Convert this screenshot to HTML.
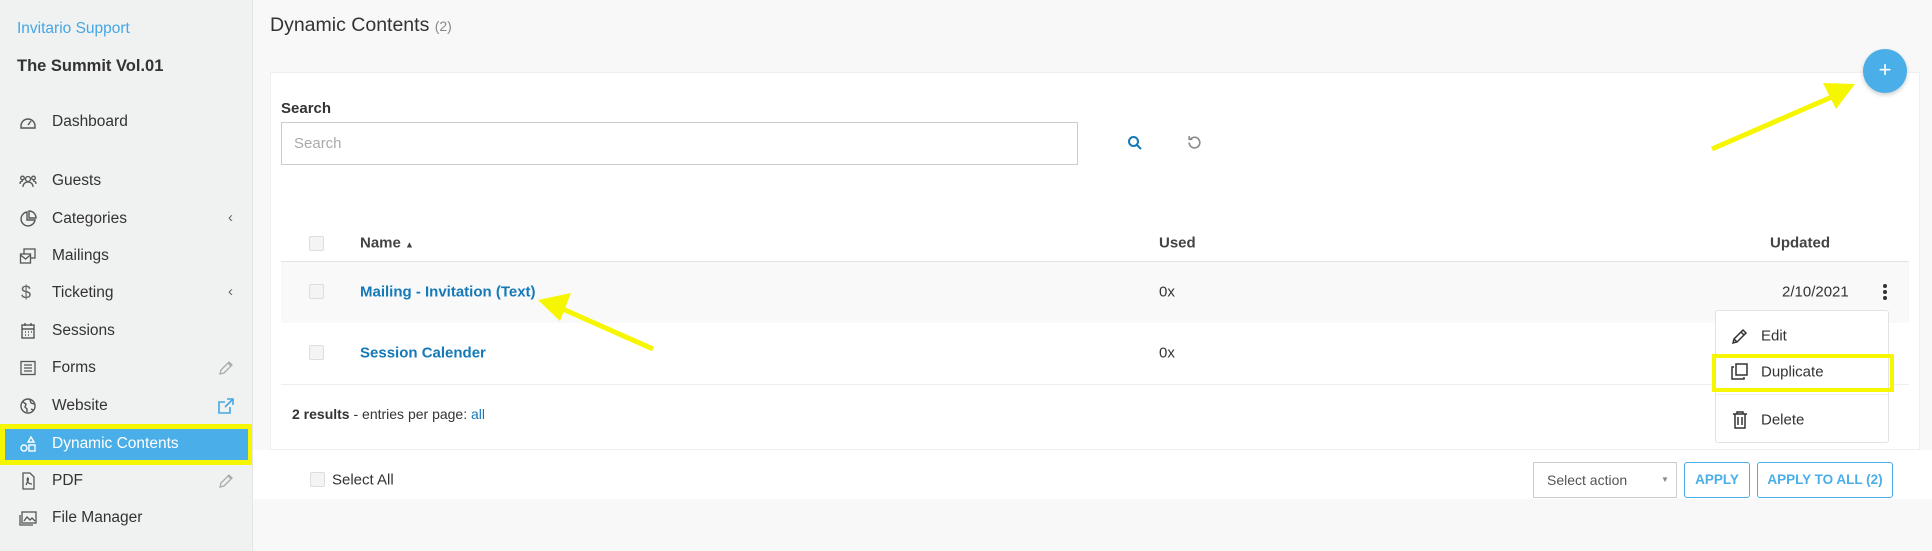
<!DOCTYPE html>
<html><head><meta charset="utf-8"><style>
*{box-sizing:border-box;margin:0;padding:0}
body{width:1932px;height:551px;overflow:hidden;background:#f8f8f8;font-family:"Liberation Sans",sans-serif;color:#333;position:relative}
.a{position:absolute;white-space:nowrap}
#side{position:absolute;left:0;top:0;width:253px;height:551px;background:#f0f1f1;border-right:1px solid #e6e6e6;overflow:hidden}
.nav{position:absolute;left:52px;font-size:15.5px;color:#333;transform:translateY(-50%)}
.ic{position:absolute;left:19px;width:18px;height:18px;transform:translateY(-50%)}
.cb{position:absolute;width:15px;height:15px;border:1px solid #ddd;background:#f4f4f4;border-radius:2px}
.t{font-size:15px;transform:translateY(-50%)}
.lnk{color:#1479b8}
</style></head><body>
<div id="side">
<div class="a" style="left:17px;top:20px;font-size:15.5px;color:#45a7e3">Invitario Support</div>
<div class="a" style="left:17px;top:57px;font-size:16.5px;font-weight:bold;color:#333">The Summit Vol.01</div>

<svg class="ic" style="top:122px" viewBox="0 0 18 18" fill="none" stroke="#555" stroke-width="1.4"><path d="M2 13a7 7 0 1 1 14 0v2H2z"/><path d="M9 12l3-4"/></svg>
<div class="nav a" style="top:122px">Dashboard</div>
<svg class="ic" style="top:181px" viewBox="0 0 18 18" fill="none" stroke="#555" stroke-width="1.3"><circle cx="9" cy="7" r="2.5"/><circle cx="3.5" cy="6" r="1.8"/><circle cx="14.5" cy="6" r="1.8"/><path d="M4 15c0-3 2-5 5-5s5 2 5 5M1 12c0-2 1-3 3-3M17 12c0-2-1-3-3-3"/></svg>
<div class="nav a" style="top:181px">Guests</div>
<svg class="ic" style="top:219px" viewBox="0 0 18 18" fill="none" stroke="#555" stroke-width="1.4"><path d="M8 2a7 7 0 1 0 8 8H8z"/><path d="M10 1v7h7a7 7 0 0 0-7-7z"/></svg>
<div class="nav a" style="top:219px">Categories</div>
<div class="a" style="left:228px;top:209px;font-size:15px;color:#666">‹</div>
<svg class="ic" style="top:256px" viewBox="0 0 18 18" fill="none" stroke="#555" stroke-width="1.3"><rect x="5" y="2" width="11" height="9"/><rect x="1.5" y="7" width="10" height="9" fill="#f0f1f1"/><path d="M1.5 8l5 4 5-4"/></svg>
<div class="nav a" style="top:256px">Mailings</div>
<div class="a" style="left:21px;top:293px;font-size:18px;color:#666;transform:translateY(-50%)">$</div>
<div class="nav a" style="top:293px">Ticketing</div>
<div class="a" style="left:228px;top:283px;font-size:15px;color:#666">‹</div>
<svg class="ic" style="top:331px" viewBox="0 0 18 18" fill="none" stroke="#555" stroke-width="1.4"><rect x="3" y="3" width="12" height="13"/><path d="M6 1v3M12 1v3M3 7h12M6 10h1M9 10h1M12 10h1M6 13h1M9 13h1"/></svg>
<div class="nav a" style="top:331px">Sessions</div>
<svg class="ic" style="top:368px" viewBox="0 0 18 18" fill="none" stroke="#555" stroke-width="1.3"><rect x="2" y="2.5" width="14" height="13"/><path d="M5 6h8M5 9h8M5 12h8"/></svg>
<div class="nav a" style="top:368px">Forms</div>
<svg class="a" style="left:218px;top:360px" width="16" height="16" viewBox="0 0 16 16" fill="none" stroke="#aaa" stroke-width="1.3"><path d="M2 14l1-4 8-8 3 3-8 8zM10 3l3 3"/></svg>
<svg class="ic" style="top:406px" viewBox="0 0 18 18" fill="none" stroke="#555" stroke-width="1.4"><circle cx="9" cy="9" r="7"/><path d="M4 5l3 2-1 3 2 2v3M11 3l1 3 3 1M12 12l2 1"/></svg>
<div class="nav a" style="top:406px">Website</div>
<svg class="a" style="left:217px;top:397px" width="18" height="18" viewBox="0 0 18 18" fill="none" stroke="#45a7e3" stroke-width="1.6"><path d="M13 10v6H2V5h6M10 2h6v6M16 2L8 10"/></svg>
<div class="a" style="left:0;top:424px;width:253px;height:41px;background:#f6f600"></div>
<div class="a" style="left:5px;top:429px;width:243px;height:31px;background:#4aaee8"></div>
<svg class="ic" style="top:444px" viewBox="0 0 18 18" fill="none" stroke="#fff" stroke-width="1.4"><path d="M12 2l3 5H9z"/><circle cx="5" cy="13" r="3"/><rect x="10" y="10" width="6" height="6"/></svg>
<div class="nav a" style="top:444px;color:#fff">Dynamic Contents</div>
<svg class="ic" style="top:481px" viewBox="0 0 18 18" fill="none" stroke="#555" stroke-width="1.3"><path d="M4 1h7l4 4v12H4z"/><path d="M7 13c2-4 3-6 2-7s-2 6 4 6"/></svg>
<div class="nav a" style="top:481px">PDF</div>
<svg class="a" style="left:218px;top:473px" width="16" height="16" viewBox="0 0 16 16" fill="none" stroke="#aaa" stroke-width="1.3"><path d="M2 14l1-4 8-8 3 3-8 8zM10 3l3 3"/></svg>
<svg class="ic" style="top:518px" viewBox="0 0 18 18" fill="none" stroke="#555" stroke-width="1.3"><rect x="3" y="3" width="14" height="11"/><path d="M1 6v10h13M5 12l3-4 3 3 2-2 3 3"/></svg>
<div class="nav a" style="top:518px">File Manager</div>
<svg class="ic" style="top:564px" viewBox="0 0 18 18" fill="none" stroke="#555" stroke-width="1.3"><rect x="2" y="2" width="14" height="13"/></svg>
<div class="nav a" style="top:564px">Checklist</div>
</div>

<div class="a" style="left:270px;top:14px;font-size:19.5px;color:#333">Dynamic Contents <span style="font-size:14px;color:#888">(2)</span></div>

<div class="a" style="left:270px;top:72px;width:1650px;height:378px;background:#fff;border:1px solid #efefef"></div>
<div class="a" style="left:253px;top:450px;width:1679px;height:49px;background:#fff"></div>

<div class="a" style="left:281px;top:100px;font-size:15px;font-weight:bold;color:#333">Search</div>
<div class="a" style="left:281px;top:122px;width:797px;height:43px;border:1px solid #ccc;background:#fff"></div>
<div class="a" style="left:294px;top:135px;font-size:15px;color:#aaa">Search</div>
<svg class="a" style="left:1127px;top:135px" width="16" height="16" viewBox="0 0 16 16" fill="none" stroke="#1479b8" stroke-width="2"><circle cx="6.5" cy="6.5" r="4.5"/><path d="M10 10l4 4"/></svg>
<svg class="a" style="left:1186px;top:134px" width="17" height="17" viewBox="0 0 16 16" fill="none" stroke="#888" stroke-width="1.5"><path d="M3 8a5 5 0 1 0 1.5-3.5"/><path d="M3 2v3h3"/></svg>

<div class="cb" style="left:309px;top:236px"></div>
<div class="a t" style="left:360px;top:243px;font-weight:bold;color:#444">Name <span style="font-size:9px">▲</span></div>
<div class="a t" style="left:1159px;top:243px;font-weight:bold;color:#444">Used</div>
<div class="a t" style="left:1770px;top:243px;font-weight:bold;color:#444">Updated</div>
<div class="a" style="left:281px;top:261px;width:1628px;height:1px;background:#e4e4e4"></div>
<div class="a" style="left:281px;top:262px;width:1628px;height:61px;background:#f9f9f9"></div>
<div class="cb" style="left:309px;top:284px"></div>
<div class="a t lnk" style="left:360px;top:292px;font-weight:bold">Mailing - Invitation (Text)</div>
<div class="a t" style="left:1159px;top:292px">0x</div>
<div class="a t" style="left:1782px;top:292px">2/10/2021</div>
<div class="a" style="left:1883px;top:284px;width:4px;height:4px;border-radius:50%;background:#333;box-shadow:0 6px 0 #333,0 12px 0 #333"></div>
<div class="cb" style="left:309px;top:345px"></div>
<div class="a t lnk" style="left:360px;top:353px;font-weight:bold">Session Calender</div>
<div class="a t" style="left:1159px;top:353px">0x</div>
<div class="a" style="left:281px;top:384px;width:1628px;height:1px;background:#eee"></div>
<div class="a t" style="left:292px;top:414px;font-size:14px"><b>2 results</b> - entries per page: <span class="lnk">all</span></div>

<div class="a" style="left:1715px;top:310px;width:174px;height:133px;background:#fff;border:1px solid #e2e2e2;border-radius:3px"></div>
<div class="a" style="left:1716px;top:394px;width:172px;height:1px;background:#eee"></div>
<svg class="a" style="left:1731px;top:327px" width="18" height="18" viewBox="0 0 18 18" fill="none" stroke="#333" stroke-width="1.5"><path d="M2 16l1-4 9-9 3 3-9 9zM10 5l3 3M3 12l3 3"/></svg>
<div class="a t" style="left:1761px;top:336px">Edit</div>
<svg class="a" style="left:1731px;top:363px" width="17" height="17" viewBox="0 0 17 17" fill="none" stroke="#333" stroke-width="1.5"><rect x="5" y="1" width="11" height="11"/><path d="M3 4H1v12h12v-2"/></svg>
<div class="a t" style="left:1761px;top:372px">Duplicate</div>
<div class="a" style="left:1712px;top:354px;width:182px;height:38px;border:4px solid #f6f600"></div>
<svg class="a" style="left:1732px;top:411px" width="16" height="18" viewBox="0 0 16 18" fill="none" stroke="#333" stroke-width="1.5"><path d="M1 3h14M5 3V1h6v2M3 3v14h10V3M6 6v8M10 6v8"/></svg>
<div class="a t" style="left:1761px;top:420px">Delete</div>

<div class="a" style="left:1863px;top:49px;width:44px;height:44px;border-radius:50%;background:#4aaee8;box-shadow:0 2px 4px rgba(0,0,0,.2);color:#fff;font-size:22px;text-align:center;line-height:42px">+</div>

<div class="cb" style="left:310px;top:472px"></div>
<div class="a t" style="left:332px;top:480px">Select All</div>
<div class="a" style="left:1533px;top:462px;width:144px;height:36px;border:1px solid #ccc;background:#fff"></div>
<div class="a t" style="left:1547px;top:480px;font-size:14px;color:#555">Select action</div>
<div class="a" style="left:1661px;top:475px;font-size:8px;color:#888">▼</div>
<div class="a" style="left:1684px;top:462px;width:66px;height:36px;border:1px solid #4aaee8;border-radius:3px;color:#4aaee8;font-size:13.5px;font-weight:bold;text-align:center;line-height:34px">APPLY</div>
<div class="a" style="left:1757px;top:462px;width:136px;height:36px;border:1px solid #4aaee8;border-radius:3px;color:#4aaee8;font-size:13.5px;font-weight:bold;text-align:center;line-height:34px">APPLY TO ALL (2)</div>

<svg class="a" style="left:0;top:0" width="1932" height="551" viewBox="0 0 1932 551">
<path d="M653 349L556 306" stroke="#f6f600" stroke-width="5"/>
<path d="M538 300L571 293L560 321Z" fill="#f6f600"/>
<path d="M1712 149L1834 96" stroke="#f6f600" stroke-width="5"/>
<path d="M1855 84L1823 83L1836 109Z" fill="#f6f600"/>
</svg>
</body></html>
